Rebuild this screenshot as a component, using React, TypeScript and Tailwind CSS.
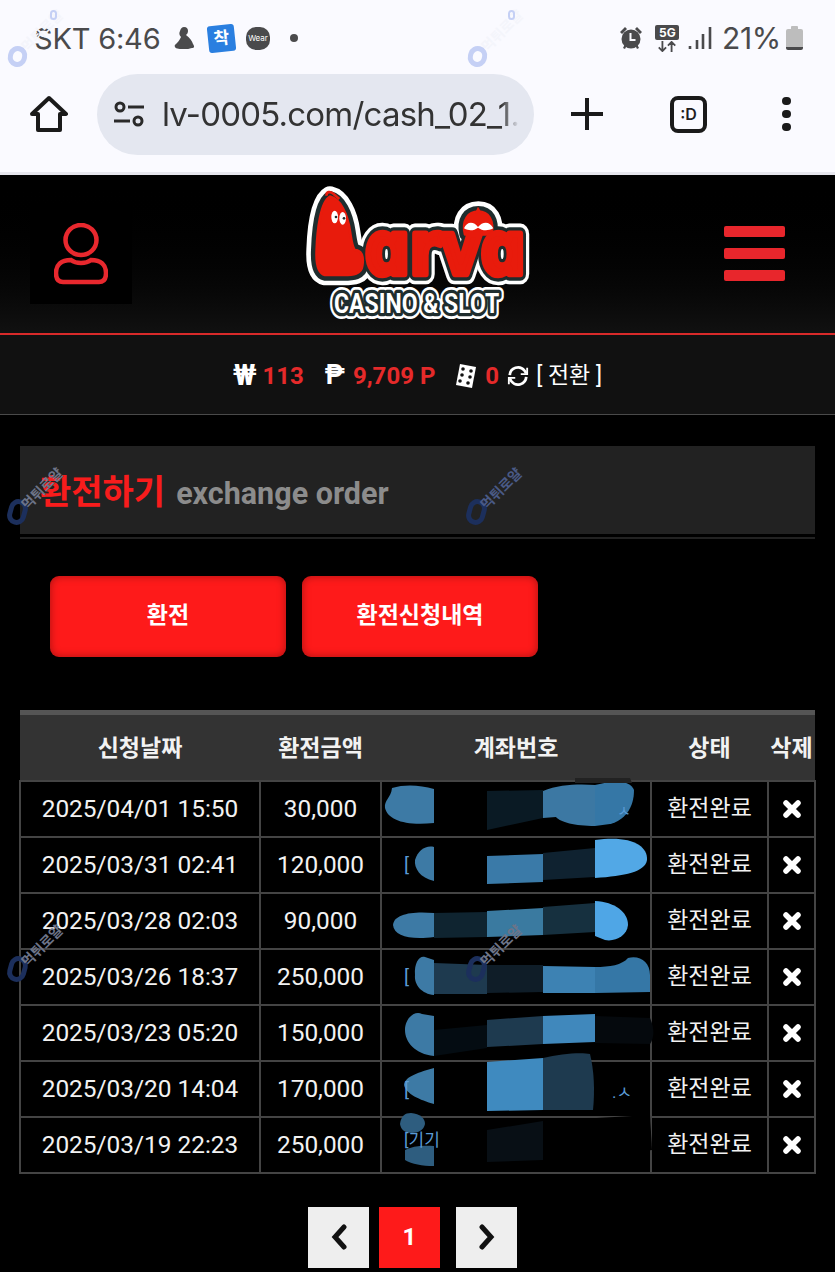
import React from 'react';

const rows = [
  { date: '2025/04/01 15:50', amount: '30,000' },
  { date: '2025/03/31 02:41', amount: '120,000' },
  { date: '2025/03/28 02:03', amount: '90,000' },
  { date: '2025/03/26 18:37', amount: '250,000' },
  { date: '2025/03/23 05:20', amount: '150,000' },
  { date: '2025/03/20 14:04', amount: '170,000' },
  { date: '2025/03/19 22:23', amount: '250,000' },
];

// painted-over account numbers, page coordinates
const smears: { d: string; fill: string }[] = [
  { d: 'M434 789 L434 823 C405 826 388 820 385 808 C384 800 391 798 392 788 C405 784 420 785 434 789Z', fill: '#3d7aa5' },
  { d: 'M487 791 L543 790 L543 818 L487 830Z', fill: '#0a1a24' },
  { d: 'M543 791 C560 784 580 784 595 785 L595 826 C575 826 560 822 556 817 L543 818Z', fill: '#3c78a3' },
  { d: 'M595 785 C615 780 630 780 634 790 C634 808 625 820 610 824 L595 826Z', fill: '#3577a6' },
  { d: 'M575 778 L630 778 L632 783 L575 783Z', fill: '#222222' },

  { d: 'M434 847 L434 881 C420 878 414 868 415 860 C418 850 426 845 434 847Z', fill: '#3d7aa5' },
  { d: 'M487 856 L543 854 L543 882 L487 884Z', fill: '#3a7aa8' },
  { d: 'M543 853 L595 848 L595 877 L543 880Z', fill: '#0f2230' },
  { d: 'M595 840 C630 835 648 845 647 860 C645 872 625 876 595 878Z', fill: '#52a8e6' },

  { d: 'M434 913 L434 937 C410 940 394 936 393 925 C394 914 412 911 434 913Z', fill: '#3d7aa5' },
  { d: 'M434 913 L487 912 L487 937 L434 938Z', fill: '#0f2430' },
  { d: 'M487 911 L543 908 L543 935 L487 937Z', fill: '#3a7aa0' },
  { d: 'M543 907 L595 903 L595 932 L543 935Z', fill: '#16303f' },
  { d: 'M595 901 C615 902 628 912 628 925 C627 936 615 942 605 940 L595 936Z', fill: '#4fa6e6' },

  { d: 'M434 960 L434 995 C422 994 414 985 415 975 C414 962 420 955 425 957Z', fill: '#3d7aa5' },
  { d: 'M434 963 L487 965 L487 994 L434 994Z', fill: '#1e3a4f' },
  { d: 'M487 965 L543 965 L543 992 L487 993Z', fill: '#0f1d28' },
  { d: 'M543 966 L595 967 L595 993 L543 993Z', fill: '#3d82b3' },
  { d: 'M595 967 C610 967 622 965 628 958 C640 955 650 962 650 975 L650 992 L595 993Z', fill: '#3577a6' },

  { d: 'M434 1016 L434 1056 C415 1054 405 1042 405 1030 C405 1018 415 1010 422 1014Z', fill: '#3d7aa5' },
  { d: 'M434 1030 L487 1025 L487 1048 L434 1056Z', fill: '#040c12' },
  { d: 'M487 1020 L543 1016 L543 1044 L487 1047Z', fill: '#1e3a4f' },
  { d: 'M543 1016 L595 1014 L595 1042 L543 1044Z', fill: '#4088bc' },
  { d: 'M595 1016 L650 1018 C655 1030 654 1038 650 1044 L595 1043Z', fill: '#05090d' },

  { d: 'M434 1068 L434 1104 C420 1100 406 1094 404 1085 C405 1076 420 1072 434 1068Z', fill: '#3d7aa5' },
  { d: 'M434 1064 L487 1062 L487 1110 L434 1108Z', fill: '#000000' },
  { d: 'M487 1062 L543 1058 L543 1110 L487 1111Z', fill: '#3f8abf' },
  { d: 'M543 1058 C560 1054 580 1052 590 1054 C594 1070 595 1090 593 1110 L543 1110Z', fill: '#1e3a4f' },

  { d: 'M400 1124 C401 1116 405 1113 411 1113 C420 1114 425 1118 425 1124 C424 1130 418 1133 412 1133 C405 1133 401 1130 400 1124Z', fill: '#2e5d7f' },
  { d: 'M405 1150 C412 1146 422 1145 434 1146 L434 1166 C422 1166 412 1164 405 1160Z', fill: '#2e5d7f' },
  { d: 'M487 1130 L543 1121 L543 1160 L487 1162Z', fill: '#080f15' },
  { d: 'M543 1121 L650 1115 L652 1150 L543 1165Z', fill: '#000000' },
];

const Watermark = ({ className, ring, text }: { className: string; ring: string; text: string }) => (
  <div className={`absolute w-[70px] h-[70px] pointer-events-none ${className}`}>
    <div className={`absolute left-[2px] bottom-[3px] w-[19px] rounded-full border-[5px] rotate-[15deg] ${ring}`} />
    <span className={`absolute left-[18px] bottom-[14px] text-[14px] font-bold leading-none whitespace-nowrap rotate-[-45deg] origin-left ${text}`}>
      먹튀로얄
    </span>
  </div>
);

const Logo = () => {
  const body =
    'M120 65 C150 72 172 115 180 170 C184 195 186 215 194 225 C212 225 222 240 217 272 C214 298 190 300 160 300 L105 300 C85 295 78 265 80 225 C82 165 92 80 120 65Z';
  const head = 'M525 178 C515 135 535 110 565 110 C595 110 612 135 605 178Z';
  const letters = { x: 226, y: 298, fontSize: 218, textLength: 481, lengthAdjust: 'spacingAndGlyphs' as const, fontFamily: 'DejaVu Sans', fontWeight: 700 };
  const tag = { x: 132, y: 415, fontSize: 84, textLength: 496, lengthAdjust: 'spacingAndGlyphs' as const, fontFamily: 'Roboto', fontWeight: 700 };
  return (
    <svg viewBox="0 0 750 465" className="w-[250px] h-[155px] block overflow-visible">
      <g stroke="#ffffff" fill="#ffffff" strokeLinejoin="round">
        <path d={body} strokeWidth="62" />
        <path d={head} strokeWidth="62" />
        <text {...letters} strokeWidth="62">ɑrvɑ</text>
      </g>
      <g stroke="#1f2d2e" fill="#1f2d2e" strokeLinejoin="round">
        <path d={body} strokeWidth="34" />
        <path d={head} strokeWidth="34" />
        <text {...letters} strokeWidth="40">ɑrvɑ</text>
      </g>
      <path d="M110 62 C108 50 120 48 130 56 L148 72" stroke="#e81b0c" strokeWidth="8" fill="none" />
      <g fill="#e81b0c" stroke="#e81b0c" strokeLinejoin="round">
        <path d={body} strokeWidth="8" />
        <path d={head} strokeWidth="8" />
        <text {...letters} strokeWidth="20">ɑrvɑ</text>
      </g>
      <ellipse cx="134" cy="126" rx="10" ry="19" fill="#ffffff" />
      <ellipse cx="158" cy="130" rx="10" ry="19" fill="#ffffff" />
      <circle cx="138" cy="126" r="4" fill="#1f2d2e" />
      <circle cx="162" cy="130" r="4" fill="#1f2d2e" />
      <path d="M522 160 C530 138 552 138 564 156 C578 138 600 138 610 160 C590 170 576 166 564 158 C552 166 540 170 522 160Z" fill="#ffffff" />
      <path d="M556 112 L564 95 L574 112Z" fill="#e81b0c" />
      <text {...tag} fill="#ffffff" stroke="#ffffff" strokeWidth="36" strokeLinejoin="round">CASINO &amp; SLOT</text>
      <text {...tag} fill="#1f2d2e" stroke="#1f2d2e" strokeWidth="20" strokeLinejoin="round">CASINO &amp; SLOT</text>
      <text {...tag} fill="#ffffff">CASINO &amp; SLOT</text>
    </svg>
  );
};

const StatusBar = () => (
  <div className="flex items-center h-[76px] pl-[34px] pr-[32px] text-[#4a4a4c] font-['Inter','Noto_Sans_CJK_KR',sans-serif]">
    <span className="text-[29px] leading-none tracking-[-0.2px] w-[139px] whitespace-nowrap">SKT 6:46</span>
    <svg viewBox="0 0 22 24" className="w-[22px] h-[24px]" fill="#4a4a4c">
      <path d="M11 1 C14 1 15 3 15 5 C15 7 14 8 13 9 C17 12 19 15 20 18 C22 21 21 22 19 22 C16 23 14 23 12 23 C7 23 3 23 2 21 C1 19 3 18 4 17 C6 15 7 13 8 11 C6 9 6 7 7 5 C8 2 9 1 11 1Z" />
    </svg>
    <div className="ml-[13px] w-[27px] h-[27px] bg-[#2a7fe0] rounded-[3px] rotate-[-6deg] flex items-center justify-center text-white text-[17px] font-bold leading-none">착</div>
    <div className="ml-[11px] w-[24px] h-[23px] bg-[#4a4a4c] rounded-[10px] flex items-center justify-center text-white text-[8px] leading-none">Wear</div>
    <div className="ml-[20px] w-[8px] h-[8px] bg-[#4a4a4c] rounded-full" />
    <div className="ml-auto flex items-center">
      <svg viewBox="0 0 24 24" className="w-[24px] h-[24px]" fill="#4a4a4c">
        <path d="M1 6 L6 1 L8 3 L3 8Z M23 6 L18 1 L16 3 L21 8Z M4 22 L6 18 L8 19 L6 23Z M20 22 L18 18 L16 19 L18 23Z" />
        <circle cx="12" cy="13" r="9.5" />
        <path d="M11.5 7 L11.5 14 L16.5 14" stroke="#fafaff" strokeWidth="2" fill="none" />
      </svg>
      <div className="ml-[12px] w-[25px] flex flex-col items-center gap-[1px]">
        <div className="w-[24px] h-[15px] bg-[#4a4a4c] rounded-[2px] text-white text-[12px] font-bold leading-[15px] text-center">5G</div>
        <svg viewBox="0 0 24 12" className="w-[22px] h-[11px]" stroke="#4a4a4c" strokeWidth="2" fill="none">
          <path d="M7 0 V11 M3 7 L7 11 L11 7 M17 12 V1 M13 5 L17 1 L21 5" />
        </svg>
      </div>
      <svg viewBox="0 0 24 24" className="ml-[8px] w-[24px] h-[24px]" stroke="#4a4a4c" strokeWidth="2.6" fill="none">
        <path d="M2 20 V23 M9 14 V23 M15 8 V23 M22 1 V23" />
      </svg>
      <span className="ml-[10px] text-[30px] leading-none tracking-[-0.3px]">21%</span>
      <div className="ml-[5px] flex flex-col items-center">
        <div className="w-[7px] h-[3px] bg-[#bdbdbd] rounded-t-[1px]" />
        <div className="w-[17px] h-[21px] bg-[#bdbdbd] rounded-[2px] border-b-[3px] border-[#4a4a4c]" />
      </div>
    </div>
  </div>
);

const ChromeBar = () => (
  <div className="flex items-center h-[96px] pb-[20px] font-['Inter',sans-serif] text-[#1f1f1f]">
    <svg viewBox="0 0 38 38" className="ml-[30px] w-[38px] h-[38px]" fill="none" stroke="#1a1a1a" strokeWidth="4" strokeLinejoin="round">
      <path d="M19 3 L36 19 L30 19 L30 35 L8 35 L8 19 L2 19Z" />
    </svg>
    <div className="ml-[29px] w-[437px] h-[81px] bg-[#e4e7f0] rounded-full flex items-center pl-[17px] overflow-hidden">
      <svg viewBox="0 0 30 26" className="w-[30px] h-[26px] shrink-0" fill="none" stroke="#2a2a2a" strokeWidth="3">
        <circle cx="6" cy="6" r="4" />
        <path d="M14 6 H30 M0 20 H16" />
        <circle cx="24" cy="20" r="4" />
      </svg>
      <div className="ml-[18px] w-[357px] overflow-hidden whitespace-nowrap text-[33px] leading-[1.3] tracking-[-0.8px] text-[#333] [mask-image:linear-gradient(to_right,black_95%,transparent)]">
        lv-0005.com/cash_02_1.
      </div>
    </div>
    <svg viewBox="0 0 34 34" className="ml-[36px] w-[34px] h-[34px]" stroke="#1a1a1a" strokeWidth="4">
      <path d="M17 1 V33 M1 17 H33" />
    </svg>
    <div className="ml-[66px] w-[37px] h-[37px] rounded-[8px] border-[4px] border-[#1a1a1a] flex items-center justify-center text-[16px] font-semibold leading-none">:D</div>
    <div className="ml-[75px] flex flex-col gap-[5px]">
      <div className="w-[9px] h-[8px] bg-[#1a1a1a] rounded-full" />
      <div className="w-[9px] h-[8px] bg-[#1a1a1a] rounded-full" />
      <div className="w-[9px] h-[8px] bg-[#1a1a1a] rounded-full" />
    </div>
  </div>
);

export default function App() {
  return (
    <div className="relative w-full h-[1272px] overflow-hidden bg-black font-['Roboto','Noto_Sans_CJK_KR',sans-serif]">
      <div className="bg-[#fafaff] h-[175px] border-b-[3px] border-[#e6e6ee]">
        <StatusBar />
        <ChromeBar />
      </div>

      <header className="h-[158px] bg-gradient-to-b from-black to-[#111111] flex items-center justify-between pl-[30px] pr-[50px]">
        <div className="w-[102px] h-[100px] bg-black flex items-center justify-center">
          <svg viewBox="0 0 54 62" className="w-[54px] h-[62px]" fill="none" stroke="#e8282e" strokeWidth="4.5">
            <ellipse cx="27" cy="17" rx="15.5" ry="15" />
            <path d="M17 37 C22 41 32 41 37 37 C47 37 52 42 52 50 C52 56 50 59 45 59 H9 C4 59 2 56 2 50 C2 42 7 37 17 37Z" />
          </svg>
        </div>
        <div className="mr-[26px] mb-[4px]">
          <Logo />
        </div>
        <div className="flex flex-col gap-[11px] mb-[2px]">
          <div className="w-[61px] h-[11px] bg-[#e8262c] rounded-[2px]" />
          <div className="w-[61px] h-[11px] bg-[#e8262c] rounded-[2px]" />
          <div className="w-[61px] h-[11px] bg-[#e8262c] rounded-[2px]" />
        </div>
      </header>

      <div className="h-[82px] bg-[#111111] border-t-[2px] border-t-[#d82a2a] border-b-[1px] border-b-[#4a4a4a] flex items-center justify-center pt-[2px] text-[24px] leading-none">
        <span className="font-bold text-white text-[29px]">₩</span>
        <span className="ml-[6px] font-bold text-[#e52a2a]">113</span>
        <span className="ml-[21px] font-bold text-white text-[27px]">₱</span>
        <span className="ml-[8px] font-bold text-[#e52a2a]">9,709 P</span>
        <svg viewBox="0 0 22 26" className="ml-[20px] w-[22px] h-[26px]" fill="#ffffff">
          <path d="M5 1 L21 4 L17 25 L1 22Z" />
          <circle cx="8" cy="6" r="1.8" fill="#111" />
          <circle cx="16" cy="8" r="1.8" fill="#111" />
          <circle cx="7" cy="12" r="1.8" fill="#111" />
          <circle cx="15" cy="14" r="1.8" fill="#111" />
          <circle cx="5" cy="18" r="1.8" fill="#111" />
          <circle cx="13" cy="20" r="1.8" fill="#111" />
        </svg>
        <span className="ml-[8px] font-bold text-[#e52a2a]">0</span>
        <svg viewBox="0 0 24 24" className="ml-[8px] w-[22px] h-[22px]" fill="none" stroke="#ffffff" strokeWidth="3">
          <path d="M3 11 A9 9 0 0 1 19 6 L21 9 M21 13 A9 9 0 0 1 5 18 L3 15" />
          <path d="M22 3 V10 H15 M2 21 V14 H9" strokeWidth="2" />
        </svg>
        <span className="ml-[7px] text-white text-[23px]">[ 전환 ]</span>
      </div>

      <div className="px-[20px] pt-[31px]">
        <div className="h-[88px] bg-[#222222] flex items-baseline pl-[20px] pt-[29px]">
          <span className="text-[34px] font-bold text-[#f81c1c] leading-none">환전하기</span>
          <span className="ml-[11px] text-[30.5px] font-bold text-[#8c8c8c] leading-none">exchange order</span>
        </div>
        <div className="mt-[3px] h-[2px] bg-[#222222]" />

        <div className="flex gap-[16px] pl-[30px] mt-[37px]">
          <button className="w-[236px] h-[81px] rounded-[9px] bg-[#fe1a1a] shadow-[inset_0_0_8px_rgba(0,0,0,0.35)] text-white text-[23px] font-bold">환전</button>
          <button className="w-[236px] h-[81px] rounded-[9px] bg-[#fe1a1a] shadow-[inset_0_0_8px_rgba(0,0,0,0.35)] text-white text-[23px] font-bold">환전신청내역</button>
        </div>

        <div className="relative mt-[53px]">
          <table className="w-[795px] -ml-[1px] table-fixed border-collapse text-[#f2f2f2]">
            <colgroup>
              <col className="w-[240px]" />
              <col className="w-[121px]" />
              <col className="w-[270px]" />
              <col className="w-[117px]" />
              <col className="w-[47px]" />
            </colgroup>
            <thead>
              <tr className="h-[68px] bg-[#333333] text-[23px] font-bold">
                <th className="border-t-[5px] border-[#555555] p-0 pt-[3px] font-bold">신청날짜</th>
                <th className="border-t-[5px] border-[#555555] p-0 pt-[3px] font-bold">환전금액</th>
                <th className="border-t-[5px] border-[#555555] p-0 pt-[3px] font-bold">계좌번호</th>
                <th className="border-t-[5px] border-[#555555] p-0 pt-[3px] font-bold">상태</th>
                <th className="border-t-[5px] border-[#555555] p-0 pt-[3px] font-bold whitespace-nowrap">삭제</th>
              </tr>
            </thead>
            <tbody>
              {rows.map((row) => (
                <tr key={row.date} className="h-[56px] text-[24.4px] text-center">
                  <td className="border-2 border-[#444444] p-0 pt-[1px]">{row.date}</td>
                  <td className="border-2 border-[#444444] p-0 pt-[1px]">{row.amount}</td>
                  <td className="border-2 border-[#444444] p-0" />
                  <td className="border-2 border-[#444444] p-0 pt-[2px] text-[23px]">환전완료</td>
                  <td className="border-2 border-[#444444] p-0">
                    <svg viewBox="0 0 20 20" className="w-[20px] h-[20px] mx-auto" stroke="#ffffff" strokeWidth="5.5" strokeLinecap="round">
                      <path d="M4 4 L16 16 M16 4 L4 16" />
                    </svg>
                  </td>
                </tr>
              ))}
            </tbody>
          </table>
          <svg viewBox="20 710 795 462" className="absolute inset-0 w-[795px] h-[462px] overflow-visible pointer-events-none">
            {smears.map((s, i) => (
              <path key={i} d={s.d} fill={s.fill} />
            ))}
            <g fill="#5b9bd5" fontFamily="Roboto, 'Noto Sans CJK KR', sans-serif" fontSize="19">
              <text x="404" y="871">[</text>
              <text x="404" y="983">[</text>
              <text x="404" y="1096">[</text>
              <text x="404" y="1146" fontSize="17">[기기</text>
              <text x="612" y="1098" fontSize="17">.ㅅ</text>
              <text x="617" y="816" fontSize="15">ㅅ</text>
            </g>
          </svg>
        </div>

        <div className="flex justify-center items-stretch h-[61px] mt-[33px] pr-[10px]">
          <div className="w-[61px] bg-[#eeeeee] flex items-center justify-center">
            <svg viewBox="0 0 16 26" className="w-[16px] h-[26px]" fill="none" stroke="#111111" strokeWidth="5" strokeLinecap="round">
              <path d="M13 3 L4 13 L13 23" />
            </svg>
          </div>
          <div className="ml-[10px] w-[61px] bg-[#fe1a1a] flex items-center justify-center text-white text-[24px] font-bold">1</div>
          <div className="ml-[16px] w-[61px] bg-[#eeeeee] flex items-center justify-center">
            <svg viewBox="0 0 16 26" className="w-[16px] h-[26px]" fill="none" stroke="#111111" strokeWidth="5" strokeLinecap="round">
              <path d="M3 3 L12 13 L3 23" />
            </svg>
          </div>
        </div>
      </div>

      <Watermark className="left-[6px] top-[0px]" ring="h-[21px] border-[#c5d0f5]" text="text-[#f4f5fb]" />
      <Watermark className="left-[466px] top-[0px]" ring="h-[21px] border-[#c5d0f5]" text="text-[#f4f5fb]" />
      <div className="absolute left-[50px] top-[10px] w-[7px] h-[10px] rounded-full border-[2px] border-[#c5d0f5]" />
      <div className="absolute left-[508px] top-[10px] w-[7px] h-[10px] rounded-full border-[2px] border-[#c5d0f5]" />
      <Watermark className="left-[6px] top-[458px]" ring="h-[26px] border-[#1c2f5c]" text="text-[#6d7488]" />
      <Watermark className="left-[465px] top-[458px]" ring="h-[26px] border-[#1c2f5c]" text="text-[#4a5a86]" />
      <Watermark className="left-[6px] top-[915px]" ring="h-[26px] border-[#1c2f5c]" text="text-[#6d7488]" />
      <Watermark className="left-[465px] top-[915px]" ring="h-[26px] border-[#1c2f5c]" text="text-[#6d7488]" />
    </div>
  );
}
